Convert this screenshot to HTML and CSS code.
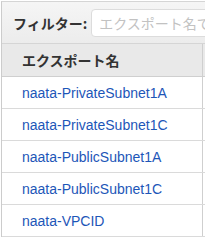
FILE: index.html
```html
<!DOCTYPE html>
<html lang="ja">
<head>
  <meta charset="UTF-8">
  <title>エクスポート</title>
  <link rel="stylesheet" href="styles.css">
</head>
<body>
  <div class="panel">
    <div class="filter-bar">
      <label class="filter-label">フィルター:</label>
      <input type="text" class="filter-input" placeholder="エクスポート名で検索">
    </div>
    <table class="exports">
      <thead>
        <tr><th>エクスポート名</th><th></th></tr>
      </thead>
      <tbody>
        <tr><td><a href="#">naata-PrivateSubnet1A</a></td><td></td></tr>
        <tr><td><a href="#">naata-PrivateSubnet1C</a></td><td></td></tr>
        <tr><td><a href="#">naata-PublicSubnet1A</a></td><td></td></tr>
        <tr><td><a href="#">naata-PublicSubnet1C</a></td><td></td></tr>
        <tr><td><a href="#">naata-VPCID</a></td><td></td></tr>
      </tbody>
    </table>
  </div>
</body>
</html>
```

FILE: styles.css
```css
body {
  margin: 0;
  padding: 1px 0 0 1px;
  background-color: #fff;
  font-family: "Liberation Sans", Arial, "Noto Sans CJK JP", sans-serif;
  font-size: 14px;
  overflow: hidden;
}

.panel {
  overflow: hidden;
  border-top: 1px solid #d5d5d5;
  border-left: 1px solid #cccccc;
}

.filter-bar {
  height: 41px;
  display: flex;
  align-items: center;
  padding-left: 11px;
  background: linear-gradient(#f5f5f5, #ececec);
  border-bottom: 1px solid #d5d5d5;
}

.filter-label {
  flex-shrink: 0;
  font-weight: bold;
  color: #333;
  margin-right: 4px;
  font-family: "Noto Sans CJK JP", sans-serif;
}

.filter-input {
  flex: 1;
  min-width: 0;
  margin-right: -20px;
  height: 28px;
  box-sizing: border-box;
  border: 1px solid #dcdcdc;
  border-radius: 4px;
  padding: 0 7px;
  font-size: 14px;
  font-family: "Noto Sans CJK JP", sans-serif;
  background-color: #fff;
}

.filter-input::placeholder {
  color: #c2c2c2;
}

.exports {
  border-collapse: collapse;
  table-layout: fixed;
  width: 100%;
}

.exports th {
  height: 32px;
  padding: 0 0 0 20px;
  text-align: left;
  background-color: #e9e9e9;
  color: #333;
  font-family: "Noto Sans CJK JP", sans-serif;
  font-weight: bold;
  border-bottom: 1px solid #cfcfcf;
}

.exports th:first-child {
  width: 180px;
  border-right: 1px solid #cfcfcf;
}

.exports td:first-child {
  border-right: 1px solid #cfcfcf;
  white-space: nowrap;
}

.exports td {
  height: 31px;
  padding: 0 0 0 20px;
  border-bottom: 1px solid #dadada;
}

.exports a {
  color: #1d56b8;
  text-decoration: none;
}
```
